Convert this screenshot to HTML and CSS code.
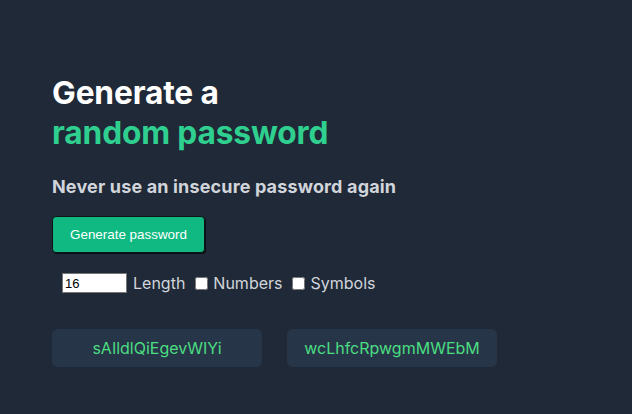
FILE: index.html
```html
<!DOCTYPE html>
<html>
<head>
<meta charset="utf-8">
<link rel="stylesheet" href="styles.css">
</head>
<body>
<main class="container">
  <h1 class="title">Generate a<br><span class="accent">random password</span></h1>
  <p class="subtitle">Never use an insecure password again</p>
  <button class="generate-btn">Generate password</button>
  <div class="options">
    <input class="length-input" type="number" value="16">
    <label class="opt-label">Length</label>
    <input class="check" type="checkbox" id="numbers">
    <label class="opt-label" for="numbers">Numbers</label>
    <input class="check" type="checkbox" id="symbols">
    <label class="opt-label" for="symbols">Symbols</label>
  </div>
  <div class="passwords">
    <div class="password-box">sAIldlQiEgevWIYi</div>
    <div class="password-box">wcLhfcRpwgmMWEbM</div>
  </div>
</main>
</body>
</html>
```
FILE: styles.css
```css
html, body {
  margin: 0;
  padding: 0;
  background: #1f2937;
  height: 100%;
}
body {
  font-family: Inter, "Noto Sans", sans-serif;
}
.container {
  padding: 73px 52px 0 52px;
}
.title {
  margin: 0;
  font-size: 31.7px;
  line-height: 40px;
  font-weight: 700;
  color: #ffffff;
  letter-spacing: -0.15px;
}
.accent {
  color: #2fcf8f;
}
.subtitle {
  margin: 20px 0 0 0;
  font-size: 18px;
  line-height: 28px;
  font-weight: 700;
  color: #d1d5db;
  letter-spacing: 0.15px;
}
.generate-btn {
  margin-top: 15px;
  width: 153px;
  height: 37px;
  background: #10b981;
  color: #ffffff;
  font-family: "Liberation Sans", Arial, sans-serif;
  font-size: 13.4px;
  border: 1px solid #0f1419;
  border-radius: 4px;
  box-shadow: 1px 1px 0 #0b0f14;
}
.options {
  display: flex;
  align-items: center;
  margin-top: 19px;
  padding-left: 10px;
  height: 22px;
}
.length-input {
  width: 59px;
  height: 16px;
  padding: 1px 2px;
  margin: 0 6px 0 0;
  border: 1px solid #767676;
  background: #fff;
  font-family: "Liberation Sans", Arial, sans-serif;
  font-size: 13px;
  box-sizing: content-box;
}
.opt-label {
  font-size: 16px;
  color: #d1d5db;
  margin-right: 6px;
}
.check {
  width: 13px;
  height: 13px;
  margin: 0 5px 0 4px;
}
.passwords {
  display: flex;
  gap: 25px;
  margin-top: 35px;
}
.password-box {
  width: 210px;
  height: 38px;
  display: flex;
  align-items: center;
  justify-content: center;
  background: #273549;
  border-radius: 6px;
  color: #4ade80;
  font-size: 16px;
}
```
